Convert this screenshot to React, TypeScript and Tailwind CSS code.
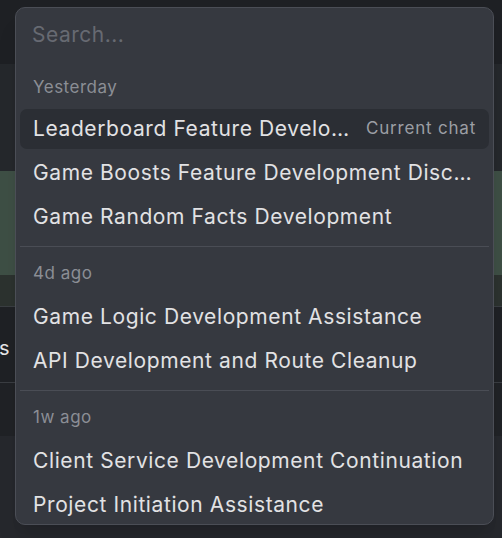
import { ReactNode } from "react";

type Chat = { title: string; current?: boolean };

const groups: { label: string; chats: Chat[] }[] = [
  {
    label: "Yesterday",
    chats: [
      { title: "Leaderboard Feature Development Discussion", current: true },
      { title: "Game Boosts Feature Development Discussion" },
      { title: "Game Random Facts Development" },
    ],
  },
  {
    label: "4d ago",
    chats: [
      { title: "Game Logic Development Assistance" },
      { title: "API Development and Route Cleanup" },
    ],
  },
  {
    label: "1w ago",
    chats: [
      { title: "Client Service Development Continuation" },
      { title: "Project Initiation Assistance" },
      { title: "Database Schema Planning" },
    ],
  },
];

function Band({ className, children }: { className: string; children?: ReactNode }) {
  return <div className={className}>{children}</div>;
}

export default function App() {
  return (
    <div
      className="relative h-[538px] w-[502px] overflow-hidden bg-[#26282d]"
      style={{ fontFamily: "Inter, 'Noto Sans', sans-serif" }}
    >
      {/* page behind the popup */}
      <Band className="h-[64px] bg-[#1e2024]" />
      <Band className="h-[107px] bg-[#25282c]" />
      <Band className="h-[104px] bg-[#3e4f45]" />
      <Band className="h-[32px] bg-[#2c322f] border-b border-[#3a3e42]" />
      <Band className="h-[76px] bg-[#1f2125] border-b border-[#3a3d42] flex items-center pt-[6px]">
        <span className="-ml-[67px] text-[20px] text-[#e4e4e6]">Settings</span>
      </Band>
      <Band className="h-[53px] bg-[#202226]" />

      {/* chat switcher popup */}
      <div className="absolute left-[15px] top-[7px] h-[518px] w-[479px] overflow-hidden rounded-[10px] border border-[#4b4e56] bg-[#363940] shadow-xl">
        <div className="flex h-[53px] items-center px-[16px]">
          <input
            placeholder="Search..."
            className="w-full bg-transparent text-[21px] tracking-[0.5px] text-[#e4e4e6] outline-none placeholder:text-[#676a72]"
          />
        </div>

        <div className="px-[4px]">
          {groups.map((group, gi) => (
            <div key={group.label}>
              {gi > 0 && <div className="mt-[9px] h-px bg-[#4a4d55]" />}
              <div
                className={`flex items-center px-[13px] text-[17px] tracking-[0.5px] text-[#8b8e95] ${
                  gi === 0 ? "h-[48px] pt-[6px]" : "h-[50px] pt-[4px]"
                }`}
              >
                {group.label}
              </div>
              <div className="flex flex-col gap-[4px]">
                {group.chats.map((chat) => (
                  <div
                    key={chat.title}
                    className={`flex h-[40px] items-center gap-[14px] rounded-[7px] px-[13px] ${
                      chat.current ? "bg-[#2b2e34]" : ""
                    }`}
                  >
                    <span className="min-w-0 flex-1 truncate text-[21px] tracking-[0.6px] text-[#e2e2e4]">
                      {chat.title}
                    </span>
                    {chat.current && (
                      <span className="shrink-0 text-[17px] tracking-[0.8px] text-[#9c9ea4]">
                        Current chat
                      </span>
                    )}
                  </div>
                ))}
              </div>
            </div>
          ))}
        </div>
      </div>
    </div>
  );
}
